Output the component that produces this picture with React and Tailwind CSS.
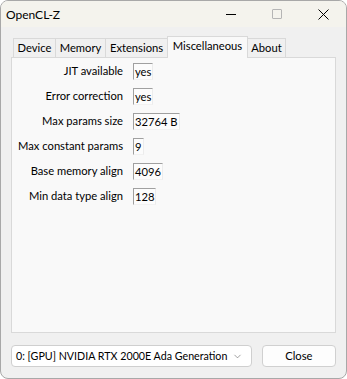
import { ChevronDown } from "lucide-react";

const rows = [
    ["JIT available", "yes"],
    ["Error correction", "yes"],
    ["Max params size", "32764 B"],
    ["Max constant params", "9"],
    ["Base memory align", "4096"],
    ["Min data type align", "128"],
];

const tabs = [
    ["Device", "w-[43px]"],
    ["Memory", "w-[51px]"],
    ["Extensions", "w-[63px]"],
    ["Miscellaneous", "w-[81px]"],
    ["About", "w-[39px]"],
];

export default function App() {
    return (
        <div
            className="w-[347px] h-[379px] bg-white text-[11.2px] text-black"
            style={{ fontFamily: "Lato, sans-serif" }}
        >
            <div className="w-full h-full flex flex-col rounded-[8px] border border-[#a8a8a8] bg-[#f0f0f0] overflow-hidden">
                {/* title bar */}
                <div className="h-[26px] shrink-0 bg-[#f4f3ed] flex items-center">
                    <span className="pl-[5px] pt-[2px] text-[12px]">OpenCL-Z</span>
                    <div className="ml-auto flex items-center h-full">
                        <div className="w-[46px] flex justify-center">
                            <div className="w-[10px] h-px bg-black" />
                        </div>
                        <div className="w-[46px] flex justify-center">
                            <div className="w-[10px] h-[10px] border border-[#b5b5b5] rounded-[1px]" />
                        </div>
                        <div className="w-[46px] flex justify-center">
                            <svg width="11" height="11" viewBox="0 0 11 11">
                                <path d="M0.5 0.5 L10.5 10.5 M10.5 0.5 L0.5 10.5" stroke="#000" strokeWidth="1" />
                            </svg>
                        </div>
                    </div>
                </div>

                <div className="flex-1 flex flex-col px-[10px]">
                    {/* tab strip */}
                    <div className="mt-[9px] h-[21px] flex items-end pl-[3px] relative z-10">
                        {tabs.map(([t, w]) => {
                            const sel = t === "Miscellaneous";
                            return (
                                <div
                                    key={t}
                                    className={
                                        (sel
                                            ? "h-[22px] -mb-px pb-[3px] bg-[#f9f9f9] border border-b-0 border-[#d9d9d9] -ml-px flex items-center justify-center"
                                            : "h-[19px] bg-[#f0f0f0] border border-b-0 border-[#d9d9d9] -ml-px flex items-center justify-center") +
                                        " whitespace-nowrap " +
                                        w
                                    }
                                >
                                    {t}
                                </div>
                            );
                        })}
                    </div>

                    {/* panel */}
                    <div className="h-[276px] bg-[#f9f9f9] border border-[#d9d9d9] pt-[5px] flex flex-col gap-[8px]">
                        {rows.map(([label, value]) => (
                            <div key={label} className="flex items-center h-[17px]">
                                <div className="w-[111px] text-right whitespace-nowrap">{label}</div>
                                <div className="ml-[10px] h-[17px] px-[1px] bg-[#fcfcfc] border-t border-l border-[#a0a0a0] border-r border-r-[#ececec] border-b border-b-[#f2f2f2] flex items-center leading-none whitespace-nowrap">
                                    {value}
                                </div>
                            </div>
                        ))}
                    </div>

                    {/* bottom row */}
                    <div className="mt-[12px] flex items-center">
                        <div className="w-[243px] h-[22px] bg-white border border-[#cfcfcf] rounded-[4px] flex items-center pl-[4px] pr-[8px]">
                            <span className="flex-1 whitespace-nowrap text-[10.7px]">0: [GPU] NVIDIA RTX 2000E Ada Generation</span>
                            <ChevronDown size={11} strokeWidth={1.2} color="#555" />
                        </div>
                        <div className="ml-[10px] w-[75px] h-[22px] bg-[#fdfdfd] border border-[#d0d0d0] rounded-[4px] flex items-center justify-center">
                            Close
                        </div>
                    </div>
                </div>
            </div>
        </div>
    );
}
